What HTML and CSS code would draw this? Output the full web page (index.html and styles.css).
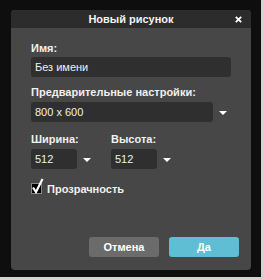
FILE: index.html
```html
<!DOCTYPE html>
<html lang="ru">
<head>
<meta charset="utf-8">
<title>Новый рисунок</title>
<link rel="stylesheet" href="styles.css">
</head>
<body>
<div class="dialog">
  <div class="titlebar">
    <span class="title">Новый рисунок</span>
    <svg class="close" width="7" height="7" viewBox="0 0 7 7"><path d="M0.8 0.8 L6.2 6.2 M6.2 0.8 L0.8 6.2" stroke="#fff" stroke-width="1.8"/></svg>
  </div>
  <div class="content">
    <div class="label l-name">Имя:</div>
    <div class="field wide">Без имени</div>
    <div class="label l-preset">Предварительные настройки:</div>
    <div class="selrow">
      <div class="field preset">800 x 600</div>
      <span class="arrow"></span>
    </div>
    <div class="dims">
      <div class="dim">
        <div class="label">Ширина:</div>
        <div class="selrow">
          <div class="field small">512</div>
          <span class="arrow"></span>
        </div>
      </div>
      <div class="dim">
        <div class="label">Высота:</div>
        <div class="selrow">
          <div class="field small">512</div>
          <span class="arrow"></span>
        </div>
      </div>
    </div>
    <div class="check">
      <span class="box"><svg class="tick" width="13" height="16" viewBox="0 0 13 16"><path d="M2 9.5 L5 14 L11.5 1" stroke="#fff" stroke-width="2.2" fill="none"/></svg></span>
      <span class="checklabel">Прозрачность</span>
    </div>
    <div class="buttons">
      <div class="btn cancel">Отмена</div>
      <div class="btn ok">Да</div>
    </div>
  </div>
</div>
</body>
</html>
```
FILE: styles.css
```css
html, body {
  margin: 0;
  padding: 0;
}
body {
  width: 263px;
  height: 279px;
  background: #0e0e0e;
  font-family: "Liberation Sans", Arial, sans-serif;
  color: #f0f0f0;
  overflow: hidden;
  padding: 10px 0 0 11px;
  box-sizing: border-box;
  border-right: 2px solid #d2d2d2;
  border-bottom: 2px solid #d2d2d2;
}
.dialog {
  width: 240px;
  height: 260px;
  border-radius: 4px;
  background: #474747;
  overflow: hidden;
  display: flex;
  flex-direction: column;
}
.titlebar {
  height: 18px;
  background: #2c2c2c;
  display: flex;
  align-items: center;
  justify-content: center;
  position: relative;
}
.title {
  font-size: 11px;
  font-weight: bold;
  color: #f2f2f2;
}
.close {
  position: absolute;
  right: 9px;
  top: 6px;
}
.content {
  flex: 1;
  padding: 13px 20px 13px 20px;
  display: flex;
  flex-direction: column;
}
.label {
  font-size: 11px;
  font-weight: bold;
  line-height: 14px;
  color: #f0f0f0;
}
.field {
  height: 20px;
  box-sizing: border-box;
  background: #2f2f2f;
  border-radius: 3px;
  font-size: 11px;
  line-height: 20px;
  padding-left: 4px;
  color: #f0f0f0;
}
.l-name { margin-bottom: 2px; }
.wide { width: 200px; }
.l-preset { margin-top: 8px; margin-bottom: 3px; }
.selrow {
  display: flex;
  align-items: center;
}
.preset { width: 182px; }
.small { width: 47px; }
.arrow {
  width: 0;
  height: 0;
  border-left: 4px solid transparent;
  border-right: 4px solid transparent;
  border-top: 4px solid #fff;
  margin-left: 6px;
  margin-top: 1px;
}
.dims {
  display: flex;
  gap: 20px;
  margin-top: 10px;
}
.dim .label { margin-bottom: 3px; }
.dim .selrow { width: 60px; }
.check {
  display: flex;
  align-items: center;
  margin-top: 14px;
  height: 11px;
}
.box {
  width: 11px;
  height: 11px;
  box-sizing: border-box;
  background: #000;
  border: 1px solid #888;
  position: relative;
}
.tick {
  position: absolute;
  left: -1px;
  top: -6px;
}
.checklabel {
  font-size: 11px;
  font-weight: bold;
  margin-left: 5px;
}
.buttons {
  margin-top: auto;
  display: flex;
  justify-content: flex-end;
  gap: 10px;
  margin-right: -8px;
}
.btn {
  width: 70px;
  height: 20px;
  border-radius: 3px;
  font-size: 11px;
  font-weight: bold;
  line-height: 20px;
  text-align: center;
  color: #fff;
}
.cancel { background: #6b6b6b; }
.ok { background: #5fbdd4; }
```
